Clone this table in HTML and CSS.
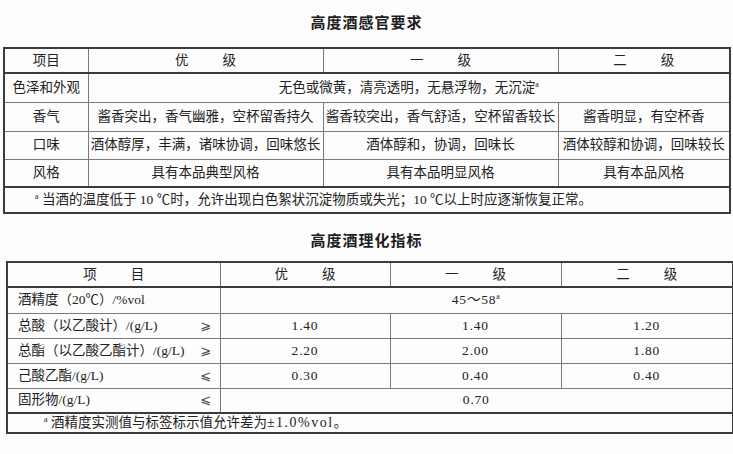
FILE: index.html
```html
<!DOCTYPE html>
<html lang="zh">
<head>
<meta charset="utf-8">
<title>高度酒感官要求</title>
<link rel="stylesheet" href="styles.css">
</head>
<body>
<main class="page">
  <h2 class="title t1">高度酒感官要求</h2>
  <table class="grid g1">
    <colgroup>
      <col class="c84"><col class="c235"><col class="c235"><col class="c172">
    </colgroup>
    <tr class="head h25">
      <th>项目</th>
      <th>优<span class="sp"></span>级</th>
      <th>一<span class="sp"></span>级</th>
      <th>二<span class="sp"></span>级</th>
    </tr>
    <tr class="h29">
      <td>色泽和外观</td>
      <td colspan="3">无色或微黄，清亮透明，无悬浮物，无沉淀<sup class="fn">a</sup></td>
    </tr>
    <tr class="h29">
      <td>香气</td>
      <td>酱香突出，香气幽雅，空杯留香持久</td>
      <td>酱香较突出，香气舒适，空杯留香较长</td>
      <td>酱香明显，有空杯香</td>
    </tr>
    <tr class="h28">
      <td>口味</td>
      <td>酒体醇厚，丰满，诸味协调，回味悠长</td>
      <td>酒体醇和，协调，回味长</td>
      <td>酒体较醇和协调，回味较长</td>
    </tr>
    <tr class="h28">
      <td>风格</td>
      <td>具有本品典型风格</td>
      <td>具有本品明显风格</td>
      <td>具有本品风格</td>
    </tr>
    <tr class="note h26">
      <td colspan="4"><sup class="fn">a</sup> 当酒的温度低于 10 ℃时，允许出现白色絮状沉淀物质或失光；10 ℃以上时应逐渐恢复正常。</td>
    </tr>
  </table>

  <h2 class="title t2">高度酒理化指标</h2>
  <table class="grid g2">
    <colgroup>
      <col class="c213"><col class="c170"><col class="c171"><col class="c172">
    </colgroup>
    <tr class="head h25">
      <th>项<span class="sp"></span>目</th>
      <th>优<span class="sp"></span>级</th>
      <th>一<span class="sp"></span>级</th>
      <th>二<span class="sp"></span>级</th>
    </tr>
    <tr class="h26">
      <td class="item"><div class="itemrow"><span>酒精度（20℃）/%vol</span></div></td>
      <td colspan="3" class="val">45～58<sup class="fn">a</sup></td>
    </tr>
    <tr class="h25">
      <td class="item"><div class="itemrow"><span>总酸（以乙酸计）/(g/L)</span><span class="rel">⩾</span></div></td>
      <td class="val">1.40</td>
      <td class="val">1.40</td>
      <td class="val">1.20</td>
    </tr>
    <tr class="h25">
      <td class="item"><div class="itemrow"><span>总酯（以乙酸乙酯计）/(g/L)</span><span class="rel">⩾</span></div></td>
      <td class="val">2.20</td>
      <td class="val">2.00</td>
      <td class="val">1.80</td>
    </tr>
    <tr class="h25">
      <td class="item"><div class="itemrow"><span>己酸乙酯/(g/L)</span><span class="rel">⩽</span></div></td>
      <td class="val">0.30</td>
      <td class="val">0.40</td>
      <td class="val">0.40</td>
    </tr>
    <tr class="h25">
      <td class="item"><div class="itemrow"><span>固形物/(g/L)</span><span class="rel">⩽</span></div></td>
      <td colspan="3" class="val">0.70</td>
    </tr>
    <tr class="note n2 h20">
      <td colspan="4"><sup class="fn">a</sup> 酒精度实测值与标签标示值允许差为<span class="wide">±1.0%vol</span>。</td>
    </tr>
  </table>
</main>
</body>
</html>
```

FILE: styles.css
```css
html, body {
  margin: 0;
  padding: 0;
  background: #fdfdfd;
}

.page {
  width: 733px;
  height: 454px;
  font-family: "Liberation Serif", "Noto Sans CJK SC", serif;
  color: #222;
  font-size: 13.5px;
}

.title {
  margin: 0;
  text-align: center;
  font-family: "Noto Sans CJK SC", sans-serif;
  font-weight: 700;
  font-size: 15px;
  letter-spacing: 1px;
  color: #1e1e1e;
}

.t1 {
  height: 47px;
  line-height: 44px;
}

.t2 {
  height: 47px;
  line-height: 52px;
}

.grid {
  border-collapse: collapse;
  table-layout: fixed;
  width: 726px;
  border: 2px solid #3c3c3c;
}

.g1 { margin-left: 3px; }
.g2 { margin-left: 6px; }

.c84 { width: 84px; }
.c235 { width: 235px; }
.c172 { width: 172px; }
.c213 { width: 213px; }
.c170 { width: 170px; }
.c171 { width: 171px; }

.grid th,
.grid td {
  border: 1px solid #7a7a7a;
  padding: 0;
  text-align: center;
  vertical-align: middle;
  white-space: nowrap;
  font-weight: 400;
  font-size: 13.5px;
  line-height: 16px;
}

.grid tr.head th {
  border-bottom: 2px solid #3c3c3c;
}

.grid tr.note td {
  border-top: 2px solid #3c3c3c;
  text-align: left;
  padding-left: 30px;
}

.grid tr.n2 td {
  padding-left: 36px;
}

.h20 { height: 20px; }
.h25 { height: 25px; }
.h26 { height: 26px; }
.h27 { height: 27px; }
.h28 { height: 28px; }
.h29 { height: 29px; }
.h30 { height: 30px; }

.sp {
  display: inline-block;
  width: 34px;
}

.fn {
  font-size: 8px;
  line-height: 0;
  vertical-align: 5px;
}

.wide {
  letter-spacing: 1.5px;
  font-size: 14px;
}

.grid td.item {
  text-align: left;
  padding: 0 8px 0 10px;
}

.itemrow {
  display: flex;
  justify-content: space-between;
  align-items: center;
}

.rel {
  font-family: "DejaVu Sans", "Noto Sans CJK SC", sans-serif;
  font-size: 13px;
  color: #444;
}

.val {
  letter-spacing: 0.8px;
}
```
